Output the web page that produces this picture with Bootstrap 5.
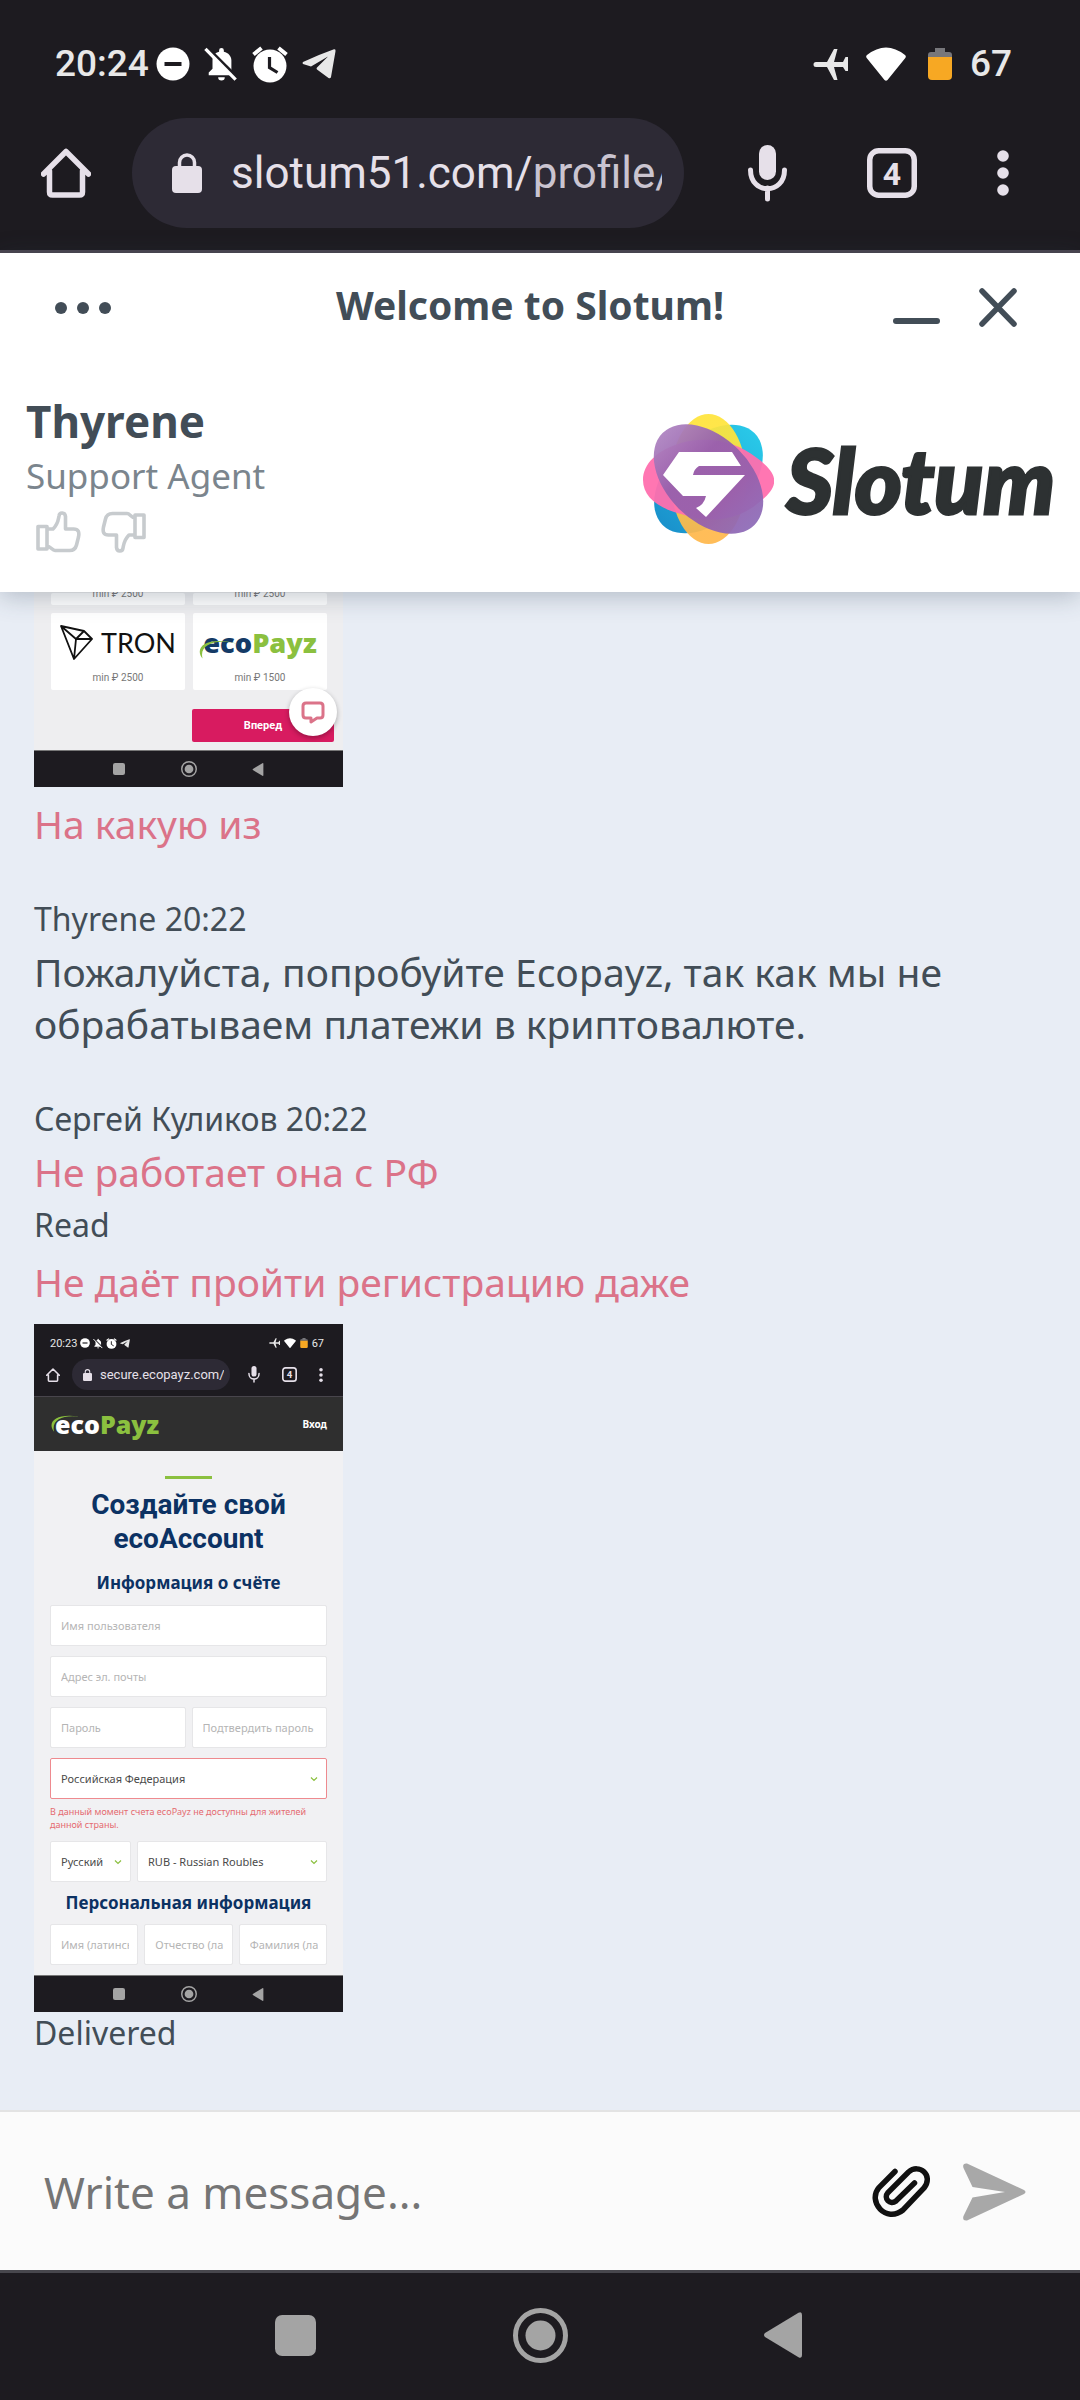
<!DOCTYPE html>
<html lang="ru">
<head>
<meta charset="utf-8">
<meta name="viewport" content="width=device-width, initial-scale=1">
<title>Welcome to Slotum!</title>
<link rel="stylesheet" href="https://cdn.jsdelivr.net/npm/bootstrap@5.3.0/dist/css/bootstrap.min.css">
<style>
:root{--ink:#424d57;--night:#1d1b20;--pill:#2d2a35;--rose:#db7389;--sky:#e8edf5;--pale:#e6e0e9}
body{font-family:"Noto Sans",sans-serif;color:var(--ink);background:var(--sky)}
svg{display:block;flex:none}
button.plain{background:none;border:0;padding:0;color:inherit}
.roboto{font-family:Roboto,sans-serif}
.night{background:var(--night);color:var(--pale)}
/* phone status row and browser bar */
.status-row{height:118px;padding:42px 68px 0 55px;font-size:37px;font-weight:500;line-height:44px;color:#e8e8e8}
.status-left{gap:14px}
.status-right{gap:18px}
.clock{width:87px}
.browser-row{height:132px;padding:0 71px 22px 41px}
.browser-row .home{margin-right:41px}
.addr{height:110px;border-radius:55px;background:var(--pill);padding:0 22px 0 40px;min-width:0}
.addr-text{font-size:44px;line-height:56px;margin-left:29px;white-space:nowrap;overflow:hidden;color:#cac4d0;flex:1}
.addr-text b{font-weight:400;color:var(--pale)}
.browser-icons{gap:80px;margin-left:64px}
.rule-top{border-bottom:3px solid #4a454f}
/* chat header */
.chat-head{z-index:2;box-shadow:0 4px 24px rgba(50,65,85,.3)}
.title-row{height:104px}
.title-row .menu{width:167px;padding:6px 0 0 54px;height:104px}
.title-row h1{font-size:39px;line-height:52px;font-weight:700}
.win-btns{gap:39px;padding:6px 63px 0 0}
.agent-row{height:235px;padding:33px 25px 0 26px}
.agent-name{font-size:44px;line-height:62px;font-weight:700}
.agent-role{font-size:35px;line-height:48px;color:#7b858d}
.thumbs{gap:20px;margin:9px 0 0 9px;color:#c7cbce}
.brandmark{margin-top:24px;gap:12px}
.wordmark{font-family:Lato,sans-serif;font-weight:900;font-style:italic;font-size:90px;line-height:110px;color:#2d3132;-webkit-text-stroke:3px #2d3132}
/* conversation */
.talk{padding:0 34px 55px}
.msg{font-size:39px;line-height:52px}
.mine{color:var(--rose)}
.meta{font-size:32px;line-height:42px}
.group{margin-top:48px}
.msg-first{margin-top:11px}
.msg-gap{margin-top:6px}
/* picture attachments */
.shot{width:309px;overflow:hidden;background:#f1f1f3;line-height:1;font-size:10px}
.shot-nav{height:37px;background:var(--night);color:#a4a4a4;border-top:1px solid #777;padding:0 79px}
.shot-pay{height:195px;background:#eeeef0}
.pay-grid{display:grid;grid-template-columns:134px 134px;gap:8px;padding:0 17px}
.pay-card{height:77px;background:#fff;border-radius:2px;font:10px/12px Roboto,sans-serif;color:#777}
.pay-card .pic{height:59px}
.pay-card.cut{height:12px}
.pay-card.cut div{margin-top:-5px}
.tron{font-family:Lato,sans-serif;font-size:27px;color:#111}
.eco{font-family:"Open Sans",sans-serif;font-weight:800;color:#8bc03f}
.eco b{font-weight:800;color:#143a66}
.eco svg{position:absolute;left:-6px;top:0}
.go{width:142px;height:33px;background:#d81b60;border:0;border-radius:2px;color:#fff;font:700 11px/33px Roboto,sans-serif;margin:19px 9px 8px auto;padding:0}
.bubble{position:absolute;right:6px;top:-18px;width:48px;height:48px;border-radius:50%;background:#fff;box-shadow:0 2px 5px rgba(0,0,0,.3);color:#db7389}
.s-status{height:35px;padding:3px 19px 0 16px;font-size:11px;color:#e8e8e8}
.s-left{gap:3px}
.s-browser{height:37px;padding:0 0 6px 12px}
.s-addr{height:31px;width:158px;flex:none;border-radius:16px;background:var(--pill);padding:0 6px 0 11px;margin:0 18px 0 12px}
.s-addr span{font-size:13px;line-height:18px;margin-left:8px;white-space:nowrap;overflow:hidden}
.s-tabs{margin:0 22px}
.s-site{height:55px;background:#2f2f2f;border-top:1px solid #48454c;padding:0 16px 0 21px;color:#fff}
.s-site .eco{font-size:25px}
.s-site .eco b{color:#fff}
.s-site a{font-size:10px;font-weight:700;color:#fff}
.greenbar{width:47px;height:3px;background:#8bc03f;margin:25px auto 9px}
.shot h2{font:700 28px/34px Roboto,sans-serif;color:#0c3263;margin:0 0 16px}
.shot h3{font:700 17px/22px "Noto Sans",sans-serif;color:#0c3263;margin:0 0 11px}
.shot form{padding:0 16px;display:grid;gap:10px}
.shot .form-control,.shot .form-select{height:41px;border:1px solid #e6e6e8;border-radius:2px;padding:0 10px;font-size:11px;line-height:16px;color:#4a4a4a;background-color:#fff;min-width:0}
.shot .form-control::placeholder{color:#b5b5b5;opacity:1}
.shot .form-select{background-image:url("data:image/svg+xml,%3Csvg xmlns='http://www.w3.org/2000/svg' viewBox='0 0 8 8'%3E%3Cpath d='M1 2.5 4 5.500 7 2.500' fill='none' stroke='%238bc03f' stroke-width='1.200'/%3E%3C/svg%3E");background-size:8px;background-position:right 8px center;background-repeat:no-repeat}
.shot .form-select.bad{border-color:#ee8a8f}
.s-error{font-size:9px;line-height:13px;color:#e56b70;margin-top:-4px;white-space:nowrap}
.s-pair{display:grid;grid-template-columns:1fr 1fr;gap:6px}
.s-lang{display:grid;grid-template-columns:81px 1fr;gap:6px}
.s-three{display:grid;grid-template-columns:1fr 1fr 1fr;gap:6px;margin-bottom:10px}
.s-three .form-control{padding-right:8px}
/* composer and system navigation */
.composer{height:160px;background:#fbfbfb;border-top:2px solid #e3e3e3;padding:2px 54px 0 44px}
.composer input{border:0;background:none;font-size:44px;line-height:60px;padding:0;color:var(--ink);box-shadow:none}
.composer input::placeholder{color:#757575;opacity:1}
.sys-nav{height:130px;border-top:3px solid #47474d;color:#a4a4a4;padding:0 278px 3px 275px}
</style>
<script src="https://cdn.jsdelivr.net/npm/bootstrap@5.3.0/dist/js/bootstrap.bundle.min.js"></script>
</head>
<body>
<svg width="0" height="0" class="position-absolute" aria-hidden="true">
  <symbol id="dnd" viewBox="0 0 34 34"><circle cx="17" cy="17" r="16.500" fill="#fff"/><path d="M8.500 17h17" stroke="#1d1b20" stroke-width="4"/></symbol>
  <symbol id="belloff" viewBox="0 0 36 36"><path d="M5 30v-3l4-4v-9c0-5 3-8 7-9V3.500a2.500 2.500 0 0 1 5 0V5c5 1 8 5 8 9v16z M15 32h7a3.500 3.500 0 0 1-7 0z" fill="#fff"/><path d="M3 .500 36 33.500" stroke="#1d1b20" stroke-width="4"/><path d="M1.500 2 33.500 34.500" stroke="#fff" stroke-width="3.500"/></symbol>
  <symbol id="alarm" viewBox="0 0 36 37"><circle cx="18" cy="20" r="16.500" fill="#fff"/><path d="M1.500 8.500 9.500 2M34.500 8.500 26.500 2" stroke="#fff" stroke-width="4"/><path d="M17.500 11v10.500l8 5" fill="none" stroke="#1d1b20" stroke-width="3.200"/></symbol>
  <symbol id="tg" viewBox="0 0 34 30"><path d="M1 13Q16 6 32 .300q2-.300 1.500 2L29 28q-.500 2-2.500 1L15 20.500q-1-1 0-2L26 7.500 9 17.500 1 15q-1-1 0-2z" fill="#e8e8e8"/></symbol>
  <symbol id="plane" viewBox="0 0 35 31"><path d="M3 13h11L21 0h3.500L21 13h9l2.500-5H35v14h-2.500L30 18h-9l3.500 13H21L14 18H3a2.500 2.500 0 0 1 0-5z" fill="#e8e8e8"/></symbol>
  <symbol id="wifi" viewBox="0 0 40 34"><path d="M1 8Q20-7 39 8q1.500 1 .300 3L21.500 33q-1.500 1.500-3 0L.700 11Q-.500 9 1 8z" fill="#fff"/></symbol>
  <symbol id="batt" viewBox="0 0 24 32"><path d="M7 0h10v4h4q3 0 3 3v2H0V7q0-3 3-3h4z" fill="#77777b"/><path d="M0 9h24v19q0 4-4 4H4q-4 0-4-4z" fill="#f7a823"/></symbol>
  <symbol id="home" viewBox="0 0 50 50"><path d="M2.500 26 25 3.500 47.500 26M8.500 23v21q0 3 3 3h27q3 0 3-3V23" fill="none" stroke="currentColor" stroke-width="5.500" stroke-linejoin="round" stroke-linecap="round"/></symbol>
  <symbol id="lock" viewBox="0 0 30 40"><rect y="13" width="30" height="27" rx="4" fill="currentColor"/><path d="M7.500 15V9.500a7.500 7.500 0 0 1 15 0V15" fill="none" stroke="currentColor" stroke-width="3.500"/></symbol>
  <symbol id="mic" viewBox="0 0 39 57"><rect x="11" width="17" height="35" rx="8.500" fill="currentColor"/><path d="M2.500 25c0 25 34 25 34 0M19.500 43v11" fill="none" stroke="currentColor" stroke-width="5" stroke-linecap="round"/></symbol>
  <symbol id="tabs" viewBox="0 0 50 50"><rect x="2.750" y="2.750" width="44.500" height="44.500" rx="9" fill="none" stroke="currentColor" stroke-width="5.500"/><text x="25" y="37" text-anchor="middle" font-family="Roboto" font-weight="700" font-size="32" fill="currentColor">4</text></symbol>
  <symbol id="kebab" viewBox="0 0 12 46"><g fill="currentColor"><circle cx="6" cy="6" r="5.800"/><circle cx="6" cy="23" r="5.800"/><circle cx="6" cy="40" r="5.800"/></g></symbol>
  <symbol id="n-sq" viewBox="0 0 40 40"><rect width="40" height="40" rx="7" fill="currentColor"/></symbol>
  <symbol id="n-home" viewBox="0 0 55 55"><circle cx="27.500" cy="27.500" r="25" fill="none" stroke="currentColor" stroke-width="5"/><circle cx="27.500" cy="27.500" r="15" fill="currentColor"/></symbol>
  <symbol id="n-back" viewBox="0 0 38 46"><path d="M1 21 34.500.700Q38-1 38 3v40q0 4-3.500 2.300L1 25q-2-2 0-4z" fill="currentColor"/></symbol>
  <symbol id="thumb" viewBox="0 0 46 46"><path d="M3 17.500h9V40H3zM12 20h6c5-5 5-8 6-13 .500-4 6-4 6.500.500V20h8c5 0 6 3 5 8l-2 8c-1 4-3 5.500-7 5.500H20c-3 0-4-4-8-4.500" fill="none" stroke="currentColor" stroke-width="3.600" stroke-linejoin="round"/></symbol>
  <symbol id="swoosh" viewBox="0 0 60 26"><path d="M7 25C-5 10 14-4 53 7 24-1 2 7 7 25z" fill="#8bc03f"/></symbol>
</svg>

<div class="min-vh-100 d-flex flex-column">
  <header class="night roboto rule-top">
    <div class="status-row d-flex justify-content-between align-items-start">
      <div class="status-left d-flex align-items-center">
        <span class="clock">20:24</span>
        <svg width="34" height="34"><use href="#dnd"/></svg>
        <svg width="34" height="36"><use href="#belloff"/></svg>
        <svg width="36" height="37"><use href="#alarm"/></svg>
        <svg width="34" height="30"><use href="#tg"/></svg>
      </div>
      <div class="status-right d-flex align-items-center">
        <svg width="35" height="31"><use href="#plane"/></svg>
        <svg width="40" height="34"><use href="#wifi"/></svg>
        <svg class="ms-1" width="24" height="32"><use href="#batt"/></svg>
        <span>67</span>
      </div>
    </div>
    <div class="browser-row d-flex align-items-center">
      <button class="plain home" aria-label="Home"><svg width="50" height="50"><use href="#home"/></svg></button>
      <div class="addr d-flex align-items-center flex-grow-1">
        <svg width="30" height="40"><use href="#lock"/></svg>
        <div class="addr-text"><b>slotum51.com/</b>profile/</div>
      </div>
      <div class="browser-icons d-flex align-items-center">
        <button class="plain" aria-label="Voice search"><svg width="39" height="57"><use href="#mic"/></svg></button>
        <button class="plain" aria-label="Tabs"><svg width="50" height="50"><use href="#tabs"/></svg></button>
        <button class="plain" aria-label="More"><svg width="12" height="46"><use href="#kebab"/></svg></button>
      </div>
    </div>
  </header>

  <section class="chat-head bg-white position-relative">
    <div class="title-row d-flex align-items-center">
      <button class="plain menu" aria-label="Menu"><svg width="58" height="12" viewBox="0 0 58 12" fill="#424d57"><circle cx="7" cy="6" r="6"/><circle cx="29" cy="6" r="6"/><circle cx="51" cy="6" r="6"/></svg></button>
      <h1 class="flex-grow-1 text-center m-0">Welcome to Slotum!</h1>
      <div class="win-btns d-flex">
        <button class="plain" aria-label="Minimize"><svg width="47" height="40" viewBox="0 0 47 40"><path d="M3 33h41" stroke="#424d57" stroke-width="6" stroke-linecap="round"/></svg></button>
        <button class="plain" aria-label="Close"><svg width="38" height="40" viewBox="0 0 38 40"><path d="M3 3 35 36M35 3 3 36" stroke="#424d57" stroke-width="5.500" stroke-linecap="round"/></svg></button>
      </div>
    </div>
    <div class="agent-row d-flex justify-content-between align-items-start">
      <div>
        <div class="agent-name">Thyrene</div>
        <div class="agent-role">Support Agent</div>
        <div class="thumbs d-flex">
          <button class="plain" aria-label="Like"><svg width="46" height="46"><use href="#thumb"/></svg></button>
          <button class="plain" aria-label="Dislike"><svg width="46" height="46" viewBox="0 0 46 46"><g transform="rotate(180 23 23)"><use href="#thumb"/></g></svg></button>
        </div>
      </div>
      <div class="brandmark d-flex align-items-center">
        <svg width="131" height="130" viewBox="0 0 131 130">
          <defs>
            <linearGradient id="gy" x2="0" y2="1"><stop offset=".2" stop-color="#ffe43c"/><stop offset=".9" stop-color="#ffb84c"/></linearGradient>
            <linearGradient id="gp" x2="1" y2="0"><stop stop-color="#ad82c0"/><stop offset=".35" stop-color="#9560ac"/><stop offset=".7" stop-color="#9560ac"/><stop offset="1" stop-color="#8e6cb8"/></linearGradient>
            <linearGradient id="gb"><stop stop-color="#1a92cc"/><stop offset="1" stop-color="#29c8e8"/></linearGradient>
          </defs>
          <ellipse cx="65.500" cy="65" rx="65" ry="41" transform="rotate(-45 65.500 65)" fill="url(#gb)"/>
          <ellipse cx="65.500" cy="65" rx="38" ry="65" fill="url(#gy)" opacity=".93"/>
          <path d="M0 66C0 50 14 36 38 29c24-7 54-3 76 15 23 17 23 29 0 46-22 18-52 19-76 10C14 94 0 82 0 66z" fill="#ff6fae" opacity=".95"/>
          <ellipse cx="65.500" cy="65" rx="65" ry="42" transform="rotate(45 65.500 65)" fill="url(#gp)" opacity=".94"/>
          <path d="M36 38h53l9 14H56q-5 3-6 9h52L63 103l-10-9q8-3 10-12H40L20 61z" fill="#fff"/>
        </svg>
        <span class="wordmark">Slotum</span>
      </div>
    </div>
  </section>

  <main class="talk flex-grow-1">
    <div class="shot shot-pay d-flex flex-column justify-content-end">
      <div class="pay-grid">
        <div class="pay-card cut text-center"><div>min ₽ 2500</div></div>
        <div class="pay-card cut text-center"><div>min ₽ 2500</div></div>
        <div class="pay-card text-center">
          <div class="pic d-flex align-items-center justify-content-center gap-2">
            <svg width="33" height="35" viewBox="0 0 33 35"><path d="M1 1 24 6 32 14 14 34zM1 1 16 14 14 34M16 14 32 14M16 14 24 6" fill="none" stroke="#111" stroke-width="1.800" stroke-linejoin="round"/></svg>
            <span class="tron">TRON</span>
          </div>min ₽ 2500
        </div>
        <div class="pay-card text-center">
          <div class="pic d-flex align-items-center justify-content-center"><span class="eco position-relative fs-3"><svg width="48" height="24"><use href="#swoosh"/></svg><b>eco</b>Payz</span></div>min ₽ 1500
        </div>
      </div>
      <div class="position-relative d-flex">
        <button class="go">Вперед</button>
        <div class="bubble d-flex align-items-center justify-content-center mt-3"><svg width="24" height="24" viewBox="0 0 24 24"><path d="M5 3h14q3 0 3 3v9q0 3-3 3h-3l-6 4v-4H5q-3 0-3-3V6q0-3 3-3z" fill="none" stroke="currentColor" stroke-width="3" stroke-linejoin="round"/></svg></div>
      </div>
      <div class="shot-nav d-flex align-items-center justify-content-between"><svg width="12" height="12"><use href="#n-sq"/></svg><svg width="16" height="16"><use href="#n-home"/></svg><svg width="12" height="13"><use href="#n-back"/></svg></div>
    </div>
    <div class="msg mine msg-first">На какую из</div>

    <div class="group">
      <div class="meta">Thyrene 20:22</div>
      <div class="msg msg-gap">Пожалуйста, попробуйте Ecopayz, так как мы не обрабатываем платежи в криптовалюте.</div>
    </div>

    <div class="group">
      <div class="meta">Сергей Куликов 20:22</div>
      <div class="msg mine msg-gap">Не работает она с РФ</div>
      <div class="meta msg-gap">Read</div>
      <div class="msg mine msg-gap pt-1">Не даёт пройти регистрацию даже</div>
      <div class="shot mt-3">
        <div class="night roboto">
          <div class="s-status d-flex align-items-center justify-content-between">
            <div class="s-left d-flex align-items-center"><span>20:23</span>
              <svg width="10" height="10"><use href="#dnd"/></svg>
              <svg width="10" height="11"><use href="#belloff"/></svg>
              <svg width="11" height="11"><use href="#alarm"/></svg>
              <svg width="10" height="9"><use href="#tg"/></svg></div>
            <div class="d-flex align-items-center gap-1"><svg width="11" height="10"><use href="#plane"/></svg>
              <svg width="12" height="10"><use href="#wifi"/></svg>
              <svg width="8" height="10"><use href="#batt"/></svg><span>67</span></div>
          </div>
          <div class="s-browser d-flex align-items-center">
            <svg width="14" height="14"><use href="#home"/></svg>
            <div class="s-addr d-flex align-items-center"><svg width="9" height="12"><use href="#lock"/></svg><span>secure.ecopayz.com/l</span></div>
            <svg width="12" height="17"><use href="#mic"/></svg>
            <svg class="s-tabs" width="15" height="15"><use href="#tabs"/></svg>
            <svg width="4" height="14"><use href="#kebab"/></svg>
          </div>
        </div>
        <div class="s-site d-flex align-items-center justify-content-between">
          <span class="eco position-relative"><svg width="44" height="22"><use href="#swoosh"/></svg><b>eco</b>Payz</span>
          <a href="#" class="text-decoration-none">Вход</a>
        </div>
        <div class="greenbar"></div>
        <h2 class="text-center">Создайте свой<br>ecoAccount</h2>
        <h3 class="text-center">Информация о счёте</h3>
        <form>
          <input class="form-control" aria-label="Имя пользователя" placeholder="Имя пользователя">
          <input class="form-control" type="email" aria-label="Адрес эл. почты" placeholder="Адрес эл. почты">
          <div class="s-pair">
            <input class="form-control" type="password" aria-label="Пароль" placeholder="Пароль">
            <input class="form-control" type="password" aria-label="Подтвердить пароль" placeholder="Подтвердить пароль">
          </div>
          <select class="form-select bad" aria-label="Страна"><option>Российская Федерация</option></select>
          <div class="s-error">В данный момент счета ecoPayz не доступны для жителей<br>данной страны.</div>
          <div class="s-lang">
            <select class="form-select" aria-label="Язык"><option>Русский</option></select>
            <select class="form-select" aria-label="Валюта"><option>RUB - Russian Roubles</option></select>
          </div>
          <h3 class="text-center m-0">Персональная информация</h3>
          <div class="s-three">
            <input class="form-control" aria-label="Имя" placeholder="Имя (латинск">
            <input class="form-control" aria-label="Отчество" placeholder="Отчество (ла">
            <input class="form-control" aria-label="Фамилия" placeholder="Фамилия (ла">
          </div>
        </form>
        <div class="shot-nav d-flex align-items-center justify-content-between"><svg width="12" height="12"><use href="#n-sq"/></svg><svg width="16" height="16"><use href="#n-home"/></svg><svg width="12" height="13"><use href="#n-back"/></svg></div>
      </div>
      <div class="meta">Delivered</div>
    </div>
  </main>

  <div class="composer d-flex align-items-center">
    <input class="form-control flex-grow-1" type="text" aria-label="Message" placeholder="Write a message...">
    <button class="plain" aria-label="Attach a file"><svg width="60" height="53" viewBox="0 0 60 53"><path d="M24 5.500 8 21.500c-12 14 7 36 24 22.500L53 22C63 9 48-3 37.500 6L17 26.500c-5 6 2 13 8 8.500L43.500 17" fill="none" stroke="#111" stroke-width="5.500" stroke-linecap="round"/></svg></button>
    <button class="plain ms-4 ps-2" aria-label="Send"><svg width="63" height="58" viewBox="0 0 63 58"><path d="M4 .500 61 27q3 2 0 4L4 57.500Q-1 58 .500 53L9.500 34.500 42 29 9.500 24 .500 5Q-1 0 4 .500z" fill="#a8a8a8"/></svg></button>
  </div>

  <nav class="sys-nav night d-flex align-items-center justify-content-between">
    <button class="plain" aria-label="Recent apps"><svg width="41" height="41"><use href="#n-sq"/></svg></button>
    <button class="plain" aria-label="Home screen"><svg width="55" height="55"><use href="#n-home"/></svg></button>
    <button class="plain" aria-label="Back"><svg width="38" height="46"><use href="#n-back"/></svg></button>
  </nav>
</div>
</body>
</html>
